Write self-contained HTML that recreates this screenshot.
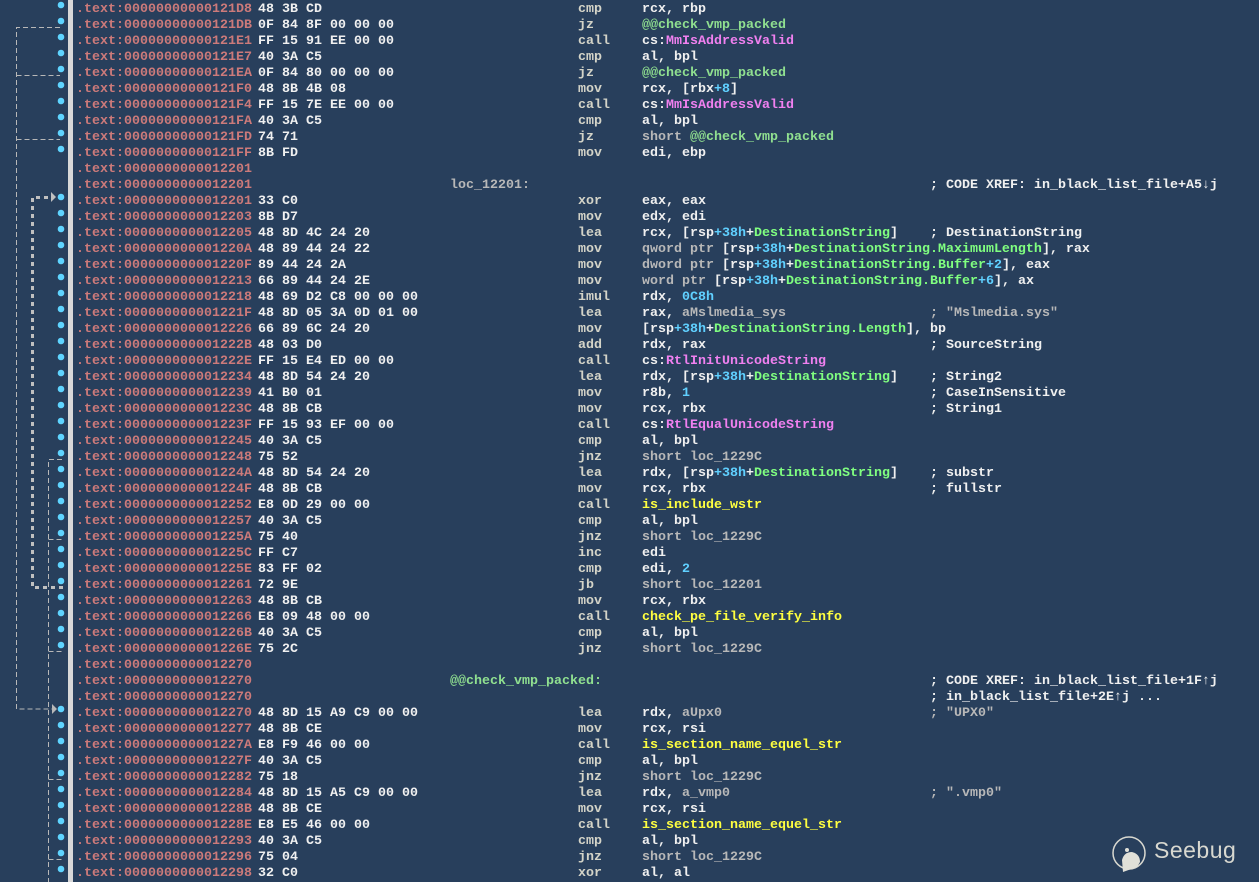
<!DOCTYPE html>
<html><head><meta charset="utf-8"><style>
html,body{margin:0;padding:0}
body{width:1259px;height:882px;background:#283f5c;position:relative;overflow:hidden;font-family:"Liberation Mono","DejaVu Sans Mono",monospace;font-size:13.33px;font-weight:bold}
.r{position:absolute;left:0;height:16px;line-height:16px;white-space:pre;width:1259px}
.r span{position:absolute;top:2px}
.a{left:76px;color:#cc7a7a}
.h{left:258px;color:#f0f0f0}
.m{left:578px;color:#d4d4c8}
.o{left:642px;color:#f0f0f0}
.c{left:930px;color:#f0f0f0}
.l{left:450px}
.g{color:#90e090}.p{color:#f080f0}.y{color:#ffff40}.b{color:#60d0ff}.n{color:#80ff80}.k{color:#b8b8b8}
#sep{position:absolute;left:68px;top:0;width:5px;height:882px;background:#d8d8d8}
</style></head><body>
<svg width="68" height="882" style="position:absolute;left:0;top:0">
<g fill="#5fd4ff">
<circle cx="61" cy="5" r="3.3"/><circle cx="61" cy="21" r="3.3"/><circle cx="61" cy="37" r="3.3"/><circle cx="61" cy="53" r="3.3"/><circle cx="61" cy="69" r="3.3"/><circle cx="61" cy="85" r="3.3"/><circle cx="61" cy="101" r="3.3"/><circle cx="61" cy="117" r="3.3"/><circle cx="61" cy="133" r="3.3"/><circle cx="61" cy="149" r="3.3"/>
<circle cx="61" cy="197" r="3.3"/><circle cx="61" cy="213" r="3.3"/><circle cx="61" cy="229" r="3.3"/><circle cx="61" cy="245" r="3.3"/><circle cx="61" cy="261" r="3.3"/><circle cx="61" cy="277" r="3.3"/><circle cx="61" cy="293" r="3.3"/><circle cx="61" cy="309" r="3.3"/><circle cx="61" cy="325" r="3.3"/><circle cx="61" cy="341" r="3.3"/><circle cx="61" cy="357" r="3.3"/><circle cx="61" cy="373" r="3.3"/><circle cx="61" cy="389" r="3.3"/><circle cx="61" cy="405" r="3.3"/><circle cx="61" cy="421" r="3.3"/><circle cx="61" cy="437" r="3.3"/><circle cx="61" cy="453" r="3.3"/><circle cx="61" cy="469" r="3.3"/><circle cx="61" cy="485" r="3.3"/><circle cx="61" cy="501" r="3.3"/><circle cx="61" cy="517" r="3.3"/><circle cx="61" cy="533" r="3.3"/><circle cx="61" cy="549" r="3.3"/><circle cx="61" cy="565" r="3.3"/><circle cx="61" cy="581" r="3.3"/><circle cx="61" cy="597" r="3.3"/><circle cx="61" cy="613" r="3.3"/><circle cx="61" cy="629" r="3.3"/><circle cx="61" cy="645" r="3.3"/>
<circle cx="61" cy="709" r="3.3"/><circle cx="61" cy="725" r="3.3"/><circle cx="61" cy="741" r="3.3"/><circle cx="61" cy="757" r="3.3"/><circle cx="61" cy="773" r="3.3"/><circle cx="61" cy="789" r="3.3"/><circle cx="61" cy="805" r="3.3"/><circle cx="61" cy="821" r="3.3"/><circle cx="61" cy="837" r="3.3"/><circle cx="61" cy="853" r="3.3"/><circle cx="61" cy="869" r="3.3"/>
</g>
<g stroke="#b8b8b8" stroke-width="1" fill="none" stroke-dasharray="5,3">
<path d="M60 27.5H16.5V709H52"/><path d="M16.5 75.5H60M16.5 139.5H60"/>
<path d="M62 459.5H48.5V882"/><path d="M48.5 539.5H62M48.5 651.5H62M48.5 779.5H62M48.5 859.5H62"/>
</g>
<path d="M52 704L57 709L52 714Z" fill="#b8b8b8"/>
<g stroke="#c0c0c0" stroke-width="3" fill="none" stroke-dasharray="4,4">
<path d="M63 587.5H32.5V197.5H50"/>
</g>
<path d="M51 192L56 197L51 202Z" fill="#c0c0c0"/>
</svg>
<div id="sep"></div>

<div class="r" style="top:0"><span class="a">.text:00000000000121D8</span><span class="h">48 3B CD</span><span class="m">cmp</span><span class="o">rcx, rbp</span></div>
<div class="r" style="top:16px"><span class="a">.text:00000000000121DB</span><span class="h">0F 84 8F 00 00 00</span><span class="m">jz</span><span class="o g">@@check_vmp_packed</span></div>
<div class="r" style="top:32px"><span class="a">.text:00000000000121E1</span><span class="h">FF 15 91 EE 00 00</span><span class="m">call</span><span class="o">cs:<b class="p">MmIsAddressValid</b></span></div>
<div class="r" style="top:48px"><span class="a">.text:00000000000121E7</span><span class="h">40 3A C5</span><span class="m">cmp</span><span class="o">al, bpl</span></div>
<div class="r" style="top:64px"><span class="a">.text:00000000000121EA</span><span class="h">0F 84 80 00 00 00</span><span class="m">jz</span><span class="o g">@@check_vmp_packed</span></div>
<div class="r" style="top:80px"><span class="a">.text:00000000000121F0</span><span class="h">48 8B 4B 08</span><span class="m">mov</span><span class="o">rcx, [rbx<b class="b">+8</b>]</span></div>
<div class="r" style="top:96px"><span class="a">.text:00000000000121F4</span><span class="h">FF 15 7E EE 00 00</span><span class="m">call</span><span class="o">cs:<b class="p">MmIsAddressValid</b></span></div>
<div class="r" style="top:112px"><span class="a">.text:00000000000121FA</span><span class="h">40 3A C5</span><span class="m">cmp</span><span class="o">al, bpl</span></div>
<div class="r" style="top:128px"><span class="a">.text:00000000000121FD</span><span class="h">74 71</span><span class="m">jz</span><span class="o"><b class="k">short </b><b class="g">@@check_vmp_packed</b></span></div>
<div class="r" style="top:144px"><span class="a">.text:00000000000121FF</span><span class="h">8B FD</span><span class="m">mov</span><span class="o">edi, ebp</span></div>
<div class="r" style="top:160px"><span class="a">.text:0000000000012201</span></div>
<div class="r" style="top:176px"><span class="a">.text:0000000000012201</span><span class="l k">loc_12201:</span><span class="c">; CODE XREF: in_black_list_file+A5↓j</span></div>
<div class="r" style="top:192px"><span class="a">.text:0000000000012201</span><span class="h">33 C0</span><span class="m">xor</span><span class="o">eax, eax</span></div>
<div class="r" style="top:208px"><span class="a">.text:0000000000012203</span><span class="h">8B D7</span><span class="m">mov</span><span class="o">edx, edi</span></div>
<div class="r" style="top:224px"><span class="a">.text:0000000000012205</span><span class="h">48 8D 4C 24 20</span><span class="m">lea</span><span class="o">rcx, [rsp<b class="b">+38h</b>+<b class="n">DestinationString</b>]</span><span class="c">; DestinationString</span></div>
<div class="r" style="top:240px"><span class="a">.text:000000000001220A</span><span class="h">48 89 44 24 22</span><span class="m">mov</span><span class="o"><b class="k">qword ptr </b>[rsp<b class="b">+38h</b>+<b class="n">DestinationString.MaximumLength</b>], rax</span></div>
<div class="r" style="top:256px"><span class="a">.text:000000000001220F</span><span class="h">89 44 24 2A</span><span class="m">mov</span><span class="o"><b class="k">dword ptr </b>[rsp<b class="b">+38h</b>+<b class="n">DestinationString.Buffer</b><b class="b">+2</b>], eax</span></div>
<div class="r" style="top:272px"><span class="a">.text:0000000000012213</span><span class="h">66 89 44 24 2E</span><span class="m">mov</span><span class="o"><b class="k">word ptr </b>[rsp<b class="b">+38h</b>+<b class="n">DestinationString.Buffer</b><b class="b">+6</b>], ax</span></div>
<div class="r" style="top:288px"><span class="a">.text:0000000000012218</span><span class="h">48 69 D2 C8 00 00 00</span><span class="m">imul</span><span class="o">rdx, <b class="b">0C8h</b></span></div>
<div class="r" style="top:304px"><span class="a">.text:000000000001221F</span><span class="h">48 8D 05 3A 0D 01 00</span><span class="m">lea</span><span class="o">rax, <b class="k">aMslmedia_sys</b></span><span class="c k">; "Mslmedia.sys"</span></div>
<div class="r" style="top:320px"><span class="a">.text:0000000000012226</span><span class="h">66 89 6C 24 20</span><span class="m">mov</span><span class="o">[rsp<b class="b">+38h</b>+<b class="n">DestinationString.Length</b>], bp</span></div>
<div class="r" style="top:336px"><span class="a">.text:000000000001222B</span><span class="h">48 03 D0</span><span class="m">add</span><span class="o">rdx, rax</span><span class="c">; SourceString</span></div>
<div class="r" style="top:352px"><span class="a">.text:000000000001222E</span><span class="h">FF 15 E4 ED 00 00</span><span class="m">call</span><span class="o">cs:<b class="p">RtlInitUnicodeString</b></span></div>
<div class="r" style="top:368px"><span class="a">.text:0000000000012234</span><span class="h">48 8D 54 24 20</span><span class="m">lea</span><span class="o">rdx, [rsp<b class="b">+38h</b>+<b class="n">DestinationString</b>]</span><span class="c">; String2</span></div>
<div class="r" style="top:384px"><span class="a">.text:0000000000012239</span><span class="h">41 B0 01</span><span class="m">mov</span><span class="o">r8b, <b class="b">1</b></span><span class="c">; CaseInSensitive</span></div>
<div class="r" style="top:400px"><span class="a">.text:000000000001223C</span><span class="h">48 8B CB</span><span class="m">mov</span><span class="o">rcx, rbx</span><span class="c">; String1</span></div>
<div class="r" style="top:416px"><span class="a">.text:000000000001223F</span><span class="h">FF 15 93 EF 00 00</span><span class="m">call</span><span class="o">cs:<b class="p">RtlEqualUnicodeString</b></span></div>
<div class="r" style="top:432px"><span class="a">.text:0000000000012245</span><span class="h">40 3A C5</span><span class="m">cmp</span><span class="o">al, bpl</span></div>
<div class="r" style="top:448px"><span class="a">.text:0000000000012248</span><span class="h">75 52</span><span class="m">jnz</span><span class="o k">short loc_1229C</span></div>
<div class="r" style="top:464px"><span class="a">.text:000000000001224A</span><span class="h">48 8D 54 24 20</span><span class="m">lea</span><span class="o">rdx, [rsp<b class="b">+38h</b>+<b class="n">DestinationString</b>]</span><span class="c">; substr</span></div>
<div class="r" style="top:480px"><span class="a">.text:000000000001224F</span><span class="h">48 8B CB</span><span class="m">mov</span><span class="o">rcx, rbx</span><span class="c">; fullstr</span></div>
<div class="r" style="top:496px"><span class="a">.text:0000000000012252</span><span class="h">E8 0D 29 00 00</span><span class="m">call</span><span class="o y">is_include_wstr</span></div>
<div class="r" style="top:512px"><span class="a">.text:0000000000012257</span><span class="h">40 3A C5</span><span class="m">cmp</span><span class="o">al, bpl</span></div>
<div class="r" style="top:528px"><span class="a">.text:000000000001225A</span><span class="h">75 40</span><span class="m">jnz</span><span class="o k">short loc_1229C</span></div>
<div class="r" style="top:544px"><span class="a">.text:000000000001225C</span><span class="h">FF C7</span><span class="m">inc</span><span class="o">edi</span></div>
<div class="r" style="top:560px"><span class="a">.text:000000000001225E</span><span class="h">83 FF 02</span><span class="m">cmp</span><span class="o">edi, <b class="b">2</b></span></div>
<div class="r" style="top:576px"><span class="a">.text:0000000000012261</span><span class="h">72 9E</span><span class="m">jb</span><span class="o k">short loc_12201</span></div>
<div class="r" style="top:592px"><span class="a">.text:0000000000012263</span><span class="h">48 8B CB</span><span class="m">mov</span><span class="o">rcx, rbx</span></div>
<div class="r" style="top:608px"><span class="a">.text:0000000000012266</span><span class="h">E8 09 48 00 00</span><span class="m">call</span><span class="o y">check_pe_file_verify_info</span></div>
<div class="r" style="top:624px"><span class="a">.text:000000000001226B</span><span class="h">40 3A C5</span><span class="m">cmp</span><span class="o">al, bpl</span></div>
<div class="r" style="top:640px"><span class="a">.text:000000000001226E</span><span class="h">75 2C</span><span class="m">jnz</span><span class="o k">short loc_1229C</span></div>
<div class="r" style="top:656px"><span class="a">.text:0000000000012270</span></div>
<div class="r" style="top:672px"><span class="a">.text:0000000000012270</span><span class="l g">@@check_vmp_packed:</span><span class="c">; CODE XREF: in_black_list_file+1F↑j</span></div>
<div class="r" style="top:688px"><span class="a">.text:0000000000012270</span><span class="c">; in_black_list_file+2E↑j ...</span></div>
<div class="r" style="top:704px"><span class="a">.text:0000000000012270</span><span class="h">48 8D 15 A9 C9 00 00</span><span class="m">lea</span><span class="o">rdx, <b class="k">aUpx0</b></span><span class="c k">; "UPX0"</span></div>
<div class="r" style="top:720px"><span class="a">.text:0000000000012277</span><span class="h">48 8B CE</span><span class="m">mov</span><span class="o">rcx, rsi</span></div>
<div class="r" style="top:736px"><span class="a">.text:000000000001227A</span><span class="h">E8 F9 46 00 00</span><span class="m">call</span><span class="o y">is_section_name_equel_str</span></div>
<div class="r" style="top:752px"><span class="a">.text:000000000001227F</span><span class="h">40 3A C5</span><span class="m">cmp</span><span class="o">al, bpl</span></div>
<div class="r" style="top:768px"><span class="a">.text:0000000000012282</span><span class="h">75 18</span><span class="m">jnz</span><span class="o k">short loc_1229C</span></div>
<div class="r" style="top:784px"><span class="a">.text:0000000000012284</span><span class="h">48 8D 15 A5 C9 00 00</span><span class="m">lea</span><span class="o">rdx, <b class="k">a_vmp0</b></span><span class="c k">; ".vmp0"</span></div>
<div class="r" style="top:800px"><span class="a">.text:000000000001228B</span><span class="h">48 8B CE</span><span class="m">mov</span><span class="o">rcx, rsi</span></div>
<div class="r" style="top:816px"><span class="a">.text:000000000001228E</span><span class="h">E8 E5 46 00 00</span><span class="m">call</span><span class="o y">is_section_name_equel_str</span></div>
<div class="r" style="top:832px"><span class="a">.text:0000000000012293</span><span class="h">40 3A C5</span><span class="m">cmp</span><span class="o">al, bpl</span></div>
<div class="r" style="top:848px"><span class="a">.text:0000000000012296</span><span class="h">75 04</span><span class="m">jnz</span><span class="o k">short loc_1229C</span></div>
<div class="r" style="top:864px"><span class="a">.text:0000000000012298</span><span class="h">32 C0</span><span class="m">xor</span><span class="o">al, al</span></div>

<svg width="40" height="40" style="position:absolute;left:1110px;top:834px" viewBox="0 0 40 40">
<circle cx="19" cy="19" r="16" fill="none" stroke="#d8d8d0" stroke-width="1.5"/>
<path d="M13 38 L12 26 Q14 18 22 18 Q30 20 30 28 L27 33 Z" fill="#e0e0d8"/>
<circle cx="17" cy="16" r="2" fill="#e0e0d8"/>
</svg>
<div style="position:absolute;left:1154px;top:837px;font-family:'Liberation Sans',sans-serif;font-size:23px;color:#d8d8d0;font-weight:normal;letter-spacing:0.5px">Seebug</div>
</body></html>
